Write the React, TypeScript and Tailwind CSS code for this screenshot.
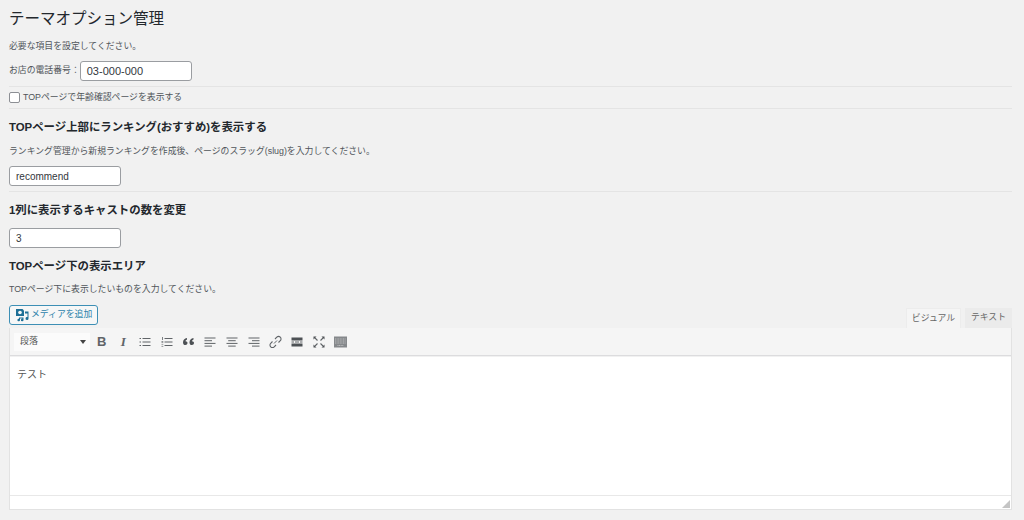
function Ic({ children, className = "" }: { children: React.ReactNode; className?: string }) {
  return (
    <svg viewBox="0 0 14 14" className={`w-[14px] h-[14px] ${className}`} fill="#606468" stroke="none">
      {children}
    </svg>
  );
}

function Lines({ rows }: { rows: [number, number, number][] }) {
  return (
    <Ic>
      {rows.map(([x, y, w], i) => (
        <rect key={i} x={x} y={y} width={w} height="1" />
      ))}
    </Ic>
  );
}

function Input({ value, className = "" }: { value: string; className?: string }) {
  return (
    <div className={`h-5 w-[112px] flex items-center px-[6px] bg-white border border-[#9a9da1] rounded-[3px] text-[10px] text-[#32373c] ${className}`}>
      {value}
    </div>
  );
}

function Rule() {
  return <div className="h-px bg-[#e4e4e4]" />;
}

function Heading({ children, className = "" }: { children: React.ReactNode; className?: string }) {
  return <h2 className={`text-[11.4px] leading-[16px] font-bold text-[#23282d] ${className}`}>{children}</h2>;
}

function Toolbar() {
  return (
    <div className="h-[28px] flex items-center pl-[4px] bg-[#f5f5f5] border-b border-[#dcdcde] gap-[7.7px]">
      <div className="w-[76px] h-[18px] mr-[-3px] flex items-center justify-between pl-[6px] pr-[4px] bg-[#fbfbfb] text-[9px] text-[#555]">
        <span>段落</span>
        <span className="w-0 h-0 border-x-[3px] border-x-transparent border-t-[4px] border-t-[#444]" />
      </div>
      <span className="w-[14px] text-center text-[13px] leading-[14px] font-bold text-[#606468] [font-family:'Liberation_Sans',sans-serif]">B</span>
      <span className="w-[14px] text-center text-[13px] leading-[14px] italic font-bold text-[#606468] [font-family:'Liberation_Serif',serif]">I</span>
      <Lines rows={[[1.500,3,1.500],[4.500,3,8],[1.500,6.500,1.500],[4.500,6.500,8],[1.500,10,1.500],[4.500,10,8]]} />
      <Ic>
        <rect x="4.500" y="3" width="8" height="1" />
        <rect x="4.500" y="6.500" width="8" height="1" />
        <rect x="4.500" y="10" width="8" height="1" />
        <rect x="2" y="2" width="0.800" height="3" />
        <rect x="1.500" y="6" width="1.800" height="0.700" />
        <rect x="1.500" y="7.400" width="1.800" height="0.700" />
        <rect x="1.500" y="9.500" width="1.800" height="0.600" />
        <rect x="1.500" y="11" width="1.800" height="0.600" />
      </Ic>
      <Ic>
        <g transform="translate(1 0)">
          <path d="M1 7.500C1 5 2.500 3.500 5 3v1.500C4 5 3.500 5.500 3.500 6.300c1.200 0 2 .7 2 1.800 0 1.200-.9 2-2.100 2C2 10.100 1 9.200 1 7.500zM7.500 7.500C7.500 5 9 3.500 11.500 3v1.500C10.500 5 10 5.500 10 6.300c1.200 0 2 .7 2 1.800 0 1.200-.9 2-2.100 2-1.400 0-2.400-.9-2.400-2.600z" fill="#4d5155" />
        </g>
      </Ic>
      <Lines rows={[[1.500,2.500,11],[1.500,5.200,7.500],[1.500,7.900,11],[1.500,10.600,7.500]]} />
      <Lines rows={[[1.500,2.500,11],[3.200,5.200,7.500],[1.500,7.900,11],[3.200,10.600,7.500]]} />
      <Lines rows={[[1.500,2.500,11],[5,5.200,7.500],[1.500,7.900,11],[5,10.600,7.500]]} />
      <Ic>
        <g transform="translate(0.500 0)">
          <path d="M5.500 8.500l3-3" stroke="#606468" strokeWidth="1" fill="none" />
          <path d="M6.500 4l1.800-1.800a2.200 2.200 0 0 1 3.500 3.500L10 7.500M7.500 10l-1.800 1.800a2.200 2.200 0 0 1-3.500-3.500L4 6.500" stroke="#606468" strokeWidth="1.100" fill="none" />
        </g>
      </Ic>
      <Ic>
        <rect x="1.500" y="2.500" width="11" height="3" fill="#4d5155" />
        <rect x="1.500" y="6.500" width="2.500" height="1" />
        <rect x="5" y="6.500" width="4" height="1" />
        <rect x="10" y="6.500" width="2.500" height="1" />
        <rect x="1.500" y="8.500" width="11" height="3" fill="#4d5155" />
      </Ic>
      <Ic>
        <path d="M3 3l2.500 2.500M11 3L8.500 5.500M3 11l2.500-2.500M11 11L8.500 8.500" stroke="#606468" strokeWidth="1.100" fill="none" />
        <path d="M1.500 1.500h3l-3 3zM12.500 1.500v3l-3-3zM1.500 12.500v-3l3 3zM12.500 12.500h-3l3-3z" fill="#4d5155" />
      </Ic>
      <Ic>
        <rect x="1" y="1.500" width="13" height="11" fill="#85888b" />
        <path d="M2 4h11M2 6h11M2 8h11M4.500 10.500h6" stroke="#d8d8d8" strokeWidth="0.700" strokeDasharray="1 0.600" />
      </Ic>
    </div>
  );
}

export default function App() {
  return (
    <div className="w-[1024px] h-[520px] overflow-hidden bg-[#f1f1f1] pl-[9px] pr-[12px] text-[8.85px] text-[#50555a] [font-family:'Liberation_Sans','Noto_Sans_CJK_JP',sans-serif]">
      <h1 className="pt-[8px] text-[15.500px] leading-[22px] text-[#23282d]">テーマオプション管理</h1>
      <p className="mt-[10px] leading-[12px]">必要な項目を設定してください。</p>
      <div className="mt-[9px] flex items-center">
        <span>お店の電話番号：</span>
        <Input value="03-000-000" className="text-[11px]" />
      </div>
      <div className="mt-[5px]"><Rule /></div>
      <div className="h-[21px] flex items-center gap-[3px]">
        <span className="w-[11px] h-[11px] bg-white border border-[#8c8f94] rounded-[2px]" />
        <span>TOPページで年齢確認ページを表示する</span>
      </div>
      <Rule />
      <Heading className="mt-[10px]">TOPページ上部にランキング(おすすめ)を表示する</Heading>
      <p className="mt-[10px] leading-[12px]">ランキング管理から新規ランキングを作成後、ページのスラッグ(slug)を入力してください。</p>
      <Input value="recommend" className="mt-[9px]" />
      <div className="mt-[5px]"><Rule /></div>
      <Heading className="mt-[10px]">1列に表示するキャストの数を変更</Heading>
      <Input value="3" className="mt-[10px]" />
      <Heading className="mt-[10px]">TOPページ下の表示エリア</Heading>
      <p className="mt-[9px] leading-[12px]">TOPページ下に表示したいものを入力してください。</p>
      <div className="mt-[10px] flex items-end justify-between">
        <div className="h-5 mb-[3px] w-[89px] flex items-center gap-[2px] pl-[5px] bg-[#f6f7f7] border border-[#3d8fb5] rounded-[3px] text-[#2b82aa]">
          <svg viewBox="0 0 14 14" className="w-[14px] h-[14px]" fill="#1d6f96">
            <path d="M1 1h6.500l1.500 1.500V8H1z" />
            <circle cx="5" cy="4.500" r="1.800" fill="#f6f7f7" />
            <path d="M10 3.500h3.500v7a1.500 1.500 0 1 1-1-1.400V5.500H10z" />
            <path d="M4 9.500h4.500v2.500a1.300 1.300 0 1 1-1-1.200v-.3H5v1.500a1.300 1.300 0 1 1-1-1.200z" />
          </svg>
          <span>メディアを追加</span>
        </div>
        <div className="flex items-end">
          <div className="w-[55px] h-5 flex items-center justify-center bg-[#f5f5f5] border border-b-0 border-[#ececec] text-[#666]">ビジュアル</div>
          <div className="ml-[4px] w-[47px] h-5 flex items-center justify-center bg-[#ebebeb] text-[#666]">テキスト</div>
        </div>
      </div>
      <div className="border-x border-b border-[#e2e2e2]">
        <Toolbar />
        <div className="mt-px h-[138px] bg-white px-[7px] pt-[10px] text-[10px] leading-[15px] text-[#555]">テスト</div>
        <div className="relative h-[14px] bg-white border-t border-[#e8e8e8]">
          <svg viewBox="0 0 8 8" className="absolute right-px bottom-px w-2 h-2"><path d="M8 0v8H0z" fill="#c4c4c4" /></svg>
        </div>
      </div>
    </div>
  );
}
